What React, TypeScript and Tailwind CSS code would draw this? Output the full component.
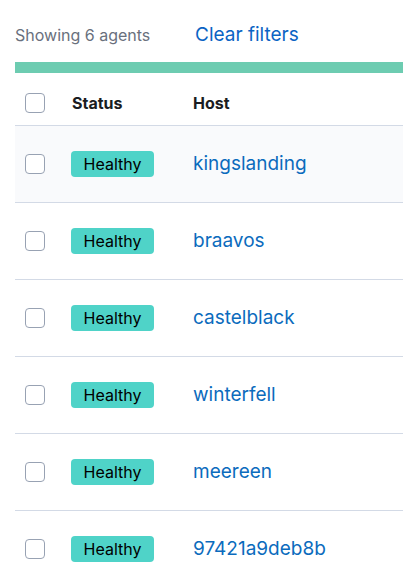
const hosts = ['kingslanding', 'braavos', 'castelblack', 'winterfell', 'meereen', '97421a9deb8b'];

function Checkbox() {
  return <div className="h-5 w-5 shrink-0 rounded-[4px] border border-[#98a2b3] bg-white" />;
}

export default function App() {
  return (
    <div className="h-[578px] w-[403px] overflow-hidden bg-white font-['Inter',sans-serif]">
      <div className="flex items-center pl-[15px] pt-[24px] h-[62px] pb-[16px]">
        <span className="w-[180px] text-[16px] text-[#69707d]">Showing 6 agents</span>
        <span className="text-[19px] text-[#0b64c4]">Clear filters</span>
      </div>
      <div className="ml-[15px] w-[600px]">
        <div className="h-[11px] bg-[#6dccb1]" />
        <div className="flex h-[53px] items-center border-b border-[#d3dae6] pl-[10px] pt-[8px]">
          <Checkbox />
          <span className="ml-[27px] w-[121px] text-[16px] font-bold text-[#1a1c21]">Status</span>
          <span className="text-[16px] font-bold text-[#1a1c21]">Host</span>
        </div>
        {hosts.map((h, i) => (
          <div
            key={h}
            className={`flex h-[77px] items-center border-b border-[#d3dae6] pl-[10px] ${i === 0 ? 'bg-[#f9fafc]' : 'bg-white'}`}
          >
            <Checkbox />
            <div className="ml-[26px] w-[122px]">
              <span className="inline-flex h-[26px] w-[83px] items-center justify-center rounded-[4px] bg-[#4fd3c8] text-[16px] text-[#000]">
                Healthy
              </span>
            </div>
            <span className="text-[19px] text-[#0b6bbd]">{h}</span>
          </div>
        ))}
      </div>
    </div>
  );
}
